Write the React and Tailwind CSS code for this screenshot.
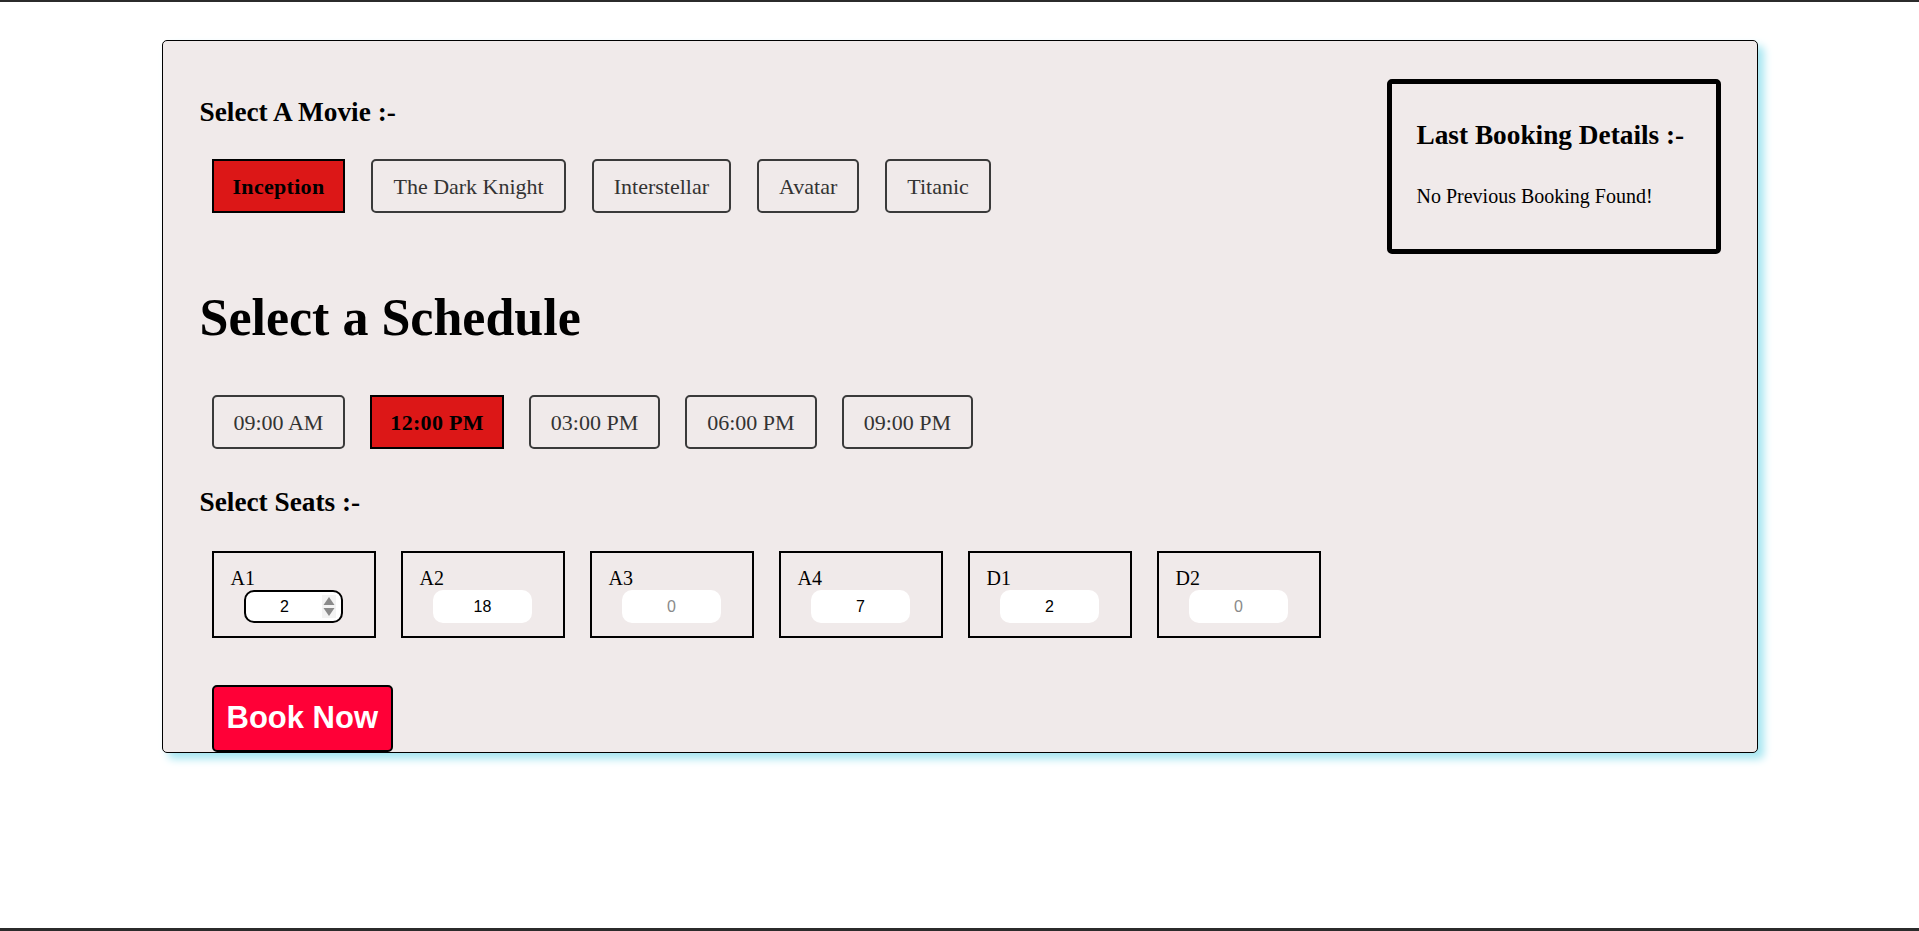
import React, { useState } from 'react';

const movies = ['Inception', 'The Dark Knight', 'Interstellar', 'Avatar', 'Titanic'];
const slots = ['09:00 AM', '12:00 PM', '03:00 PM', '06:00 PM', '09:00 PM'];
const seats = [
  { id: 'A1', value: '2', active: true },
  { id: 'A2', value: '18' },
  { id: 'A3', value: '0', empty: true },
  { id: 'A4', value: '7' },
  { id: 'D1', value: '2' },
  { id: 'D2', value: '0', empty: true },
];

const serif = { fontFamily: '"Liberation Serif", "Times New Roman", serif' };

const Choice = ({ label, selected, onClick, compact }) => {
  let cls;
  if (selected) {
    cls = 'h-[54px] border-2 border-black bg-[#dc1717] text-black font-bold text-[22px] tracking-[0.3px] ' + (compact ? 'px-[18px]' : 'px-[19px]');
  } else {
    cls = 'h-[54px] px-[20px] border-2 border-[#3a3a3a] rounded-[5px] text-[#333] text-[22px]';
  }
  return (
    <button onClick={onClick} className={cls}>
      {label}
    </button>
  );
};

const Seat = ({ seat }) => (
  <div className="w-[164px] h-[87px] border-2 border-black pt-[14px] px-[17px]">
    <div className="text-[20px] leading-[22px] text-black">{seat.id}</div>
    <div className="relative mx-auto mt-[1px] w-[99px] h-[33px]">
      <input
        readOnly
        value={seat.value}
        className={
          'w-full h-full rounded-[10px] bg-white text-center text-[16px] outline-none ' +
          (seat.active ? 'border-2 border-black pr-[18px]' : 'border-0') +
          (seat.empty ? ' text-[#8a8a8a]' : ' text-black')
        }
        style={{ fontFamily: '"Liberation Sans", Arial, sans-serif' }}
      />
      {seat.active && (
        <svg className="absolute right-[7px] top-[5px]" width="14" height="23" viewBox="0 0 14 23">
          <rect x="0" y="0" width="14" height="23" fill="#f3f3f3" />
          <path d="M7 2 L12.5 10 L1.5 10 Z" fill="#8a8a8a" />
          <path d="M1.5 13 L12.5 13 L7 21 Z" fill="#8a8a8a" />
        </svg>
      )}
    </div>
  </div>
);

export default function App() {
  const [movie, setMovie] = useState('Inception');
  const [slot, setSlot] = useState('12:00 PM');

  return (
    <div className="min-h-[931px] bg-white border-t-2 border-b-[3px] border-[#2b2b2b] pt-[38px]" style={serif}>
      <div className="w-[1596px] h-[713px] mx-auto border border-black rounded-[5px] bg-[#f0eaea] shadow-[6px_6px_8px_#a6e6f1] flex">
        <div className="flex-1 pl-[37px]">
          <h2 className="mt-[56px] text-[27.3px] leading-[31px] font-bold">Select A Movie :-</h2>
          <div className="mt-[31px] ml-[12px] flex gap-[26px]">
            {movies.map((m) => (
              <Choice key={m} label={m} selected={movie === m} onClick={() => setMovie(m)} />
            ))}
          </div>

          <h1 className="mt-[75px] text-[52px] leading-[60px] font-bold">Select a Schedule</h1>
          <div className="mt-[47px] ml-[12px] flex gap-[25px]">
            {slots.map((s) => (
              <Choice key={s} label={s} compact selected={slot === s} onClick={() => setSlot(s)} />
            ))}
          </div>

          <h2 className="mt-[38px] text-[27.3px] leading-[31px] font-bold">Select Seats :-</h2>
          <div className="mt-[33px] ml-[12px] flex gap-[25px]">
            {seats.map((s) => (
              <Seat key={s.id} seat={s} />
            ))}
          </div>

          <button
            className="mt-[47px] ml-[12px] h-[67px] px-[13px] bg-[#ff0037] border-2 border-black rounded-[5px] text-white font-bold text-[31px]"
            style={{ fontFamily: '"Liberation Sans", Arial, sans-serif' }}
          >
            Book Now
          </button>
        </div>

        <div className="pt-[38px] pr-[36px]">
          <div className="w-[334px] h-[175px] border-[5px] border-black rounded-[5px] pl-[25px] pt-[36px]">
            <h2 className="text-[27.3px] leading-[31px] font-bold">Last Booking Details :-</h2>
            <p className="mt-[34px] text-[20px] leading-[23px]">No Previous Booking Found!</p>
          </div>
        </div>
      </div>
    </div>
  );
}
